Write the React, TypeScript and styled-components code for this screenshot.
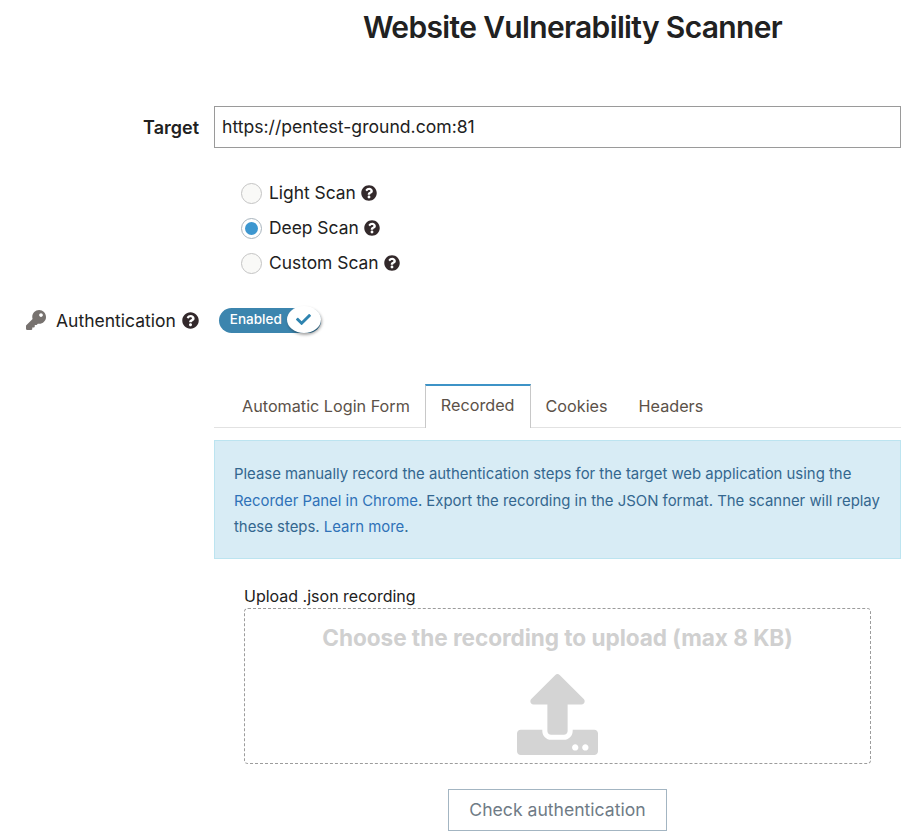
import React from 'react'
import styled, { createGlobalStyle } from 'styled-components'
import { FaCheck, FaKey, FaQuestionCircle, FaUpload } from 'react-icons/fa'

const GlobalStyle = createGlobalStyle`
  html, body {
    margin: 0;
    padding: 0;
    background: #fff;
    font-family: Inter, "Liberation Sans", sans-serif;
    color: #212121;
  }
`

const Page = styled.div`
  width: 919px;
  height: 840px;
  overflow: hidden;
  box-sizing: border-box;
  padding-right: 18px;
`

const Title = styled.h1`
  margin: 0 -18px 60px 226px;
  padding-top: 9px;
  font-size: 30px;
  line-height: 37px;
  font-weight: 600;
  letter-spacing: -0.65px;
  text-align: center;
  color: #212121;
`

const FormRow = styled.div`
  display: grid;
  grid-template-columns: 199px 1fr;
  column-gap: 15px;
  align-items: center;
`

const TargetLabel = styled.label`
  font-size: 18px;
  font-weight: 600;
  text-align: right;
`

const TargetInput = styled.input`
  box-sizing: border-box;
  width: 100%;
  height: 42px;
  padding: 0 7px 2px;
  border: 1px solid #9a9a9a;
  border-radius: 0;
  outline: none;
  font: 400 17.6px Inter, "Liberation Sans", sans-serif;
  color: #212121;
`

const RadioList = styled.div`
  display: flex;
  flex-direction: column;
  gap: 11px;
  margin: 33px 0 0 241px;
`

const RadioRow = styled.div`
  display: flex;
  align-items: center;
  height: 24px;
  font-size: 17.4px;
  color: #212121;
`

const RadioText = styled.span`
  margin-bottom: 2px;
`

const RadioMark = styled.span<{ $checked?: boolean }>`
  box-sizing: border-box;
  width: 21px;
  height: 21px;
  margin-right: 7px;
  border-radius: 50%;
  border: 1px solid ${p => (p.$checked ? '#a8b4bd' : '#c4c4c4')};
  background: ${p => (p.$checked ? '#fff' : '#f9f9f7')};
  display: flex;
  align-items: center;
  justify-content: center;
  &::after {
    content: '';
    display: ${p => (p.$checked ? 'block' : 'none')};
    width: 13px;
    height: 13px;
    border-radius: 50%;
    background: #3d97d0;
  }
`

const Help = styled(FaQuestionCircle)`
  width: 16px;
  height: 16px;
  margin-left: 5px;
  color: #33292b;
  flex: none;
`

const AuthRow = styled.div`
  display: flex;
  align-items: center;
  height: 30px;
  margin-top: 30px;
  padding-left: 26px;
  font-size: 17.5px;
`

const KeyIcon = styled(FaKey)`
  width: 20px;
  height: 20px;
  margin-right: 10px;
  color: #77726f;
  flex: none;
`

const AuthHelp = styled(Help)`
  width: 17px;
  height: 17px;
  margin-left: 6px;
`

const Toggle = styled.div`
  position: relative;
  width: 102px;
  height: 25px;
  margin-left: 20px;
  border-radius: 13px;
  background: #3c85ae;
  color: #fff;
  font-size: 13.5px;
  font-weight: 500;
  line-height: 23px;
  padding-left: 11px;
  box-sizing: border-box;
`

const ToggleKnob = styled.span`
  position: absolute;
  top: -2px;
  right: 0;
  width: 34px;
  height: 27px;
  border-radius: 50%;
  background: #fff;
  box-shadow: 1px 2px 3px rgba(0, 0, 0, 0.35);
  display: flex;
  align-items: center;
  justify-content: center;
  color: #2e84b0;
  font-size: 15px;
`

const Content = styled.div`
  margin-left: 214px;
`

const Tabs = styled.div`
  display: flex;
  height: 44px;
  margin-top: 49px;
  box-sizing: border-box;
  border-bottom: 1px solid #e2e2e2;
`

const Tab = styled.div<{ $active?: boolean }>`
  box-sizing: border-box;
  height: ${p => (p.$active ? '44px' : '43px')};
  padding: ${p => (p.$active ? '9px 15px 0' : '12px 15px 0')};
  font-size: 16.2px;
  line-height: 20px;
  color: #5b5148;
  background: ${p => (p.$active ? '#fff' : 'transparent')};
  border-top: ${p => (p.$active ? '2px solid #3d93c7' : '0')};
  border-left: ${p => (p.$active ? '1px solid #c8c8c8' : '0')};
  border-right: ${p => (p.$active ? '1px solid #c8c8c8' : '0')};
  &:first-child {
    padding-left: 28px;
  }
  &:last-child {
    padding-left: 16px;
  }
`

const Notice = styled.div`
  box-sizing: border-box;
  height: 119px;
  margin-top: 12px;
  padding: 20px 10px 20px 19px;
  border: 1px solid #bce4f0;
  background: #d8ecf5;
  color: #34678f;
  font-size: 14.9px;
  line-height: 26.5px;
`

const NoticeLink = styled.a`
  color: #2f72b8;
  text-decoration: none;
`

const UploadLabel = styled.div`
  margin: 28px 0 2px 30px;
  font-size: 16px;
  line-height: 19px;
  color: #212121;
`

const DropZone = styled.div`
  box-sizing: border-box;
  height: 156px;
  margin: 0 30px;
  border: 1px dashed #9c9c9c;
  border-radius: 4px;
  display: flex;
  flex-direction: column;
  align-items: center;
  color: #d0d0d0;
`

const DropTitle = styled.div`
  margin-top: 15px;
  font-size: 22.6px;
  line-height: 28px;
  font-weight: 700;
  letter-spacing: -0.05px;
`

const UploadIcon = styled(FaUpload)`
  width: 81px;
  height: 81px;
  margin-top: 22px;
  color: #d4d4d4;
`

const ButtonRow = styled.div`
  display: flex;
  justify-content: center;
  margin: 25px 30px 0;
`

const CheckButton = styled.button`
  box-sizing: border-box;
  width: 219px;
  height: 42px;
  padding: 0 0 2px;
  border: 1px solid #a3b5c2;
  background: #fff;
  color: #6f7b86;
  font: 400 17.6px Inter, "Liberation Sans", sans-serif;
`

export default function App() {
  return (
    <Page>
      <GlobalStyle />
      <Title>Website Vulnerability Scanner</Title>
      <FormRow>
        <TargetLabel>Target</TargetLabel>
        <TargetInput readOnly value='https://pentest-ground.com:81' />
      </FormRow>
      <RadioList>
        <RadioRow><RadioMark /><RadioText>Light Scan</RadioText><Help /></RadioRow>
        <RadioRow><RadioMark $checked /><RadioText>Deep Scan</RadioText><Help /></RadioRow>
        <RadioRow><RadioMark /><RadioText>Custom Scan</RadioText><Help /></RadioRow>
      </RadioList>
      <AuthRow>
        <KeyIcon />
        Authentication
        <AuthHelp />
        <Toggle>
          Enabled
          <ToggleKnob><FaCheck /></ToggleKnob>
        </Toggle>
      </AuthRow>
      <Content>
        <Tabs>
          <Tab>Automatic Login Form</Tab>
          <Tab $active>Recorded</Tab>
          <Tab>Cookies</Tab>
          <Tab>Headers</Tab>
        </Tabs>
        <Notice>
          Please manually record the authentication steps for the target web application using the{' '}
          <NoticeLink>Recorder Panel in Chrome</NoticeLink>. Export the recording in the JSON format. The scanner will replay
          these steps. <NoticeLink>Learn more</NoticeLink>.
        </Notice>
        <UploadLabel>Upload .json recording</UploadLabel>
        <DropZone>
          <DropTitle>Choose the recording to upload (max 8 KB)</DropTitle>
          <UploadIcon />
        </DropZone>
        <ButtonRow>
          <CheckButton>Check authentication</CheckButton>
        </ButtonRow>
      </Content>
    </Page>
  )
}
